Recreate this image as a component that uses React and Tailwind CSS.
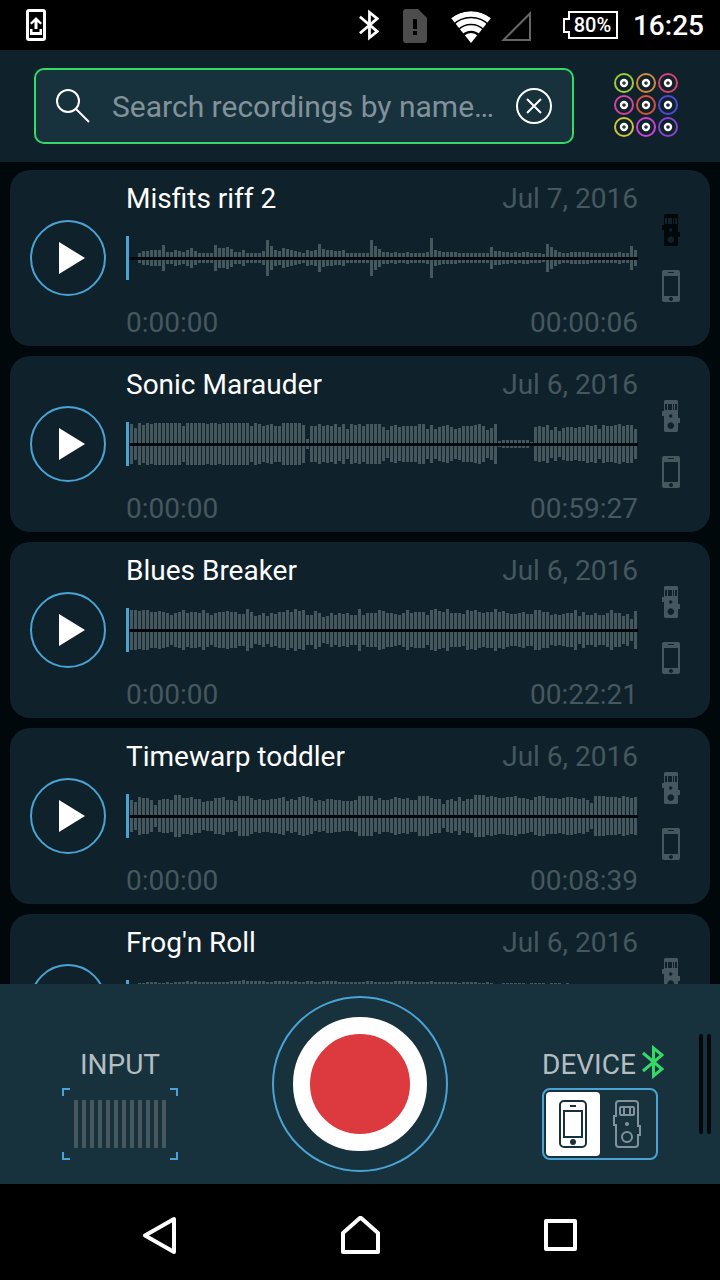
import React, { useState } from "react";

// One number per bar: its height above the centre line.
const recordings = [
  {
    title: "Misfits riff 2",
    date: "Jul 7, 2016",
    duration: "00:00:06",
    onRecorder: false,
    wave: [
      0, 0, 4, 6, 6, 7, 7, 7, 12, 5, 5, 7, 6, 5, 7, 9, 6, 4, 4, 4, 4, 12, 9, 9,
      10, 8, 5, 5, 7, 4, 4, 4, 4, 6, 17, 11, 7, 6, 9, 8, 7, 6, 5, 4, 7, 6, 7,
      13, 8, 7, 7, 6, 6, 7, 4, 4, 4, 4, 4, 4, 17, 11, 8, 5, 5, 4, 5, 4, 4, 5, 4,
      4, 4, 4, 5, 19, 7, 6, 5, 5, 5, 5, 4, 4, 4, 4, 4, 4, 4, 4, 10, 6, 6, 5, 5,
      4, 5, 4, 5, 5, 4, 4, 4, 3, 13, 10, 7, 5, 4, 4, 5, 5, 5, 5, 5, 4, 4, 4, 4,
      4, 4, 4, 5, 4, 4, 11, 7,
    ],
  },
  {
    title: "Sonic Marauder",
    date: "Jul 6, 2016",
    duration: "00:59:27",
    onRecorder: true,
    wave: [
      19, 15, 20, 18, 20, 19, 20, 20, 20, 20, 20, 20, 20, 17, 20, 20, 20, 20,
      20, 19, 20, 20, 19, 20, 20, 20, 20, 20, 20, 20, 17, 20, 19, 17, 18, 19,
      17, 17, 20, 20, 20, 20, 20, 18, 4, 17, 17, 19, 17, 18, 17, 19, 16, 19, 14,
      19, 18, 19, 17, 19, 19, 19, 19, 16, 13, 17, 18, 16, 17, 17, 17, 17, 19,
      19, 14, 18, 14, 16, 17, 18, 16, 14, 15, 17, 17, 17, 18, 19, 17, 13, 15,
      19, 2, 3, 3, 3, 3, 3, 3, 3, 1, 16, 17, 16, 18, 13, 16, 12, 15, 16, 16, 15,
      16, 16, 18, 17, 18, 14, 18, 17, 17, 18, 19, 17, 18, 18, 14,
    ],
  },
  {
    title: "Blues Breaker",
    date: "Jul 6, 2016",
    duration: "00:22:21",
    onRecorder: true,
    wave: [
      19, 19, 18, 19, 19, 17, 17, 18, 17, 16, 14, 16, 17, 19, 16, 17, 17, 16,
      19, 16, 14, 16, 17, 17, 18, 17, 17, 15, 15, 20, 17, 13, 14, 16, 13, 16,
      15, 17, 17, 19, 17, 20, 18, 19, 14, 14, 18, 16, 12, 13, 16, 14, 16, 15,
      16, 14, 14, 20, 14, 16, 16, 16, 19, 18, 16, 16, 15, 14, 16, 19, 16, 17,
      17, 17, 14, 19, 20, 18, 17, 20, 16, 16, 16, 15, 19, 18, 19, 17, 16, 17,
      17, 20, 17, 18, 16, 15, 15, 16, 17, 15, 15, 19, 19, 17, 17, 14, 15, 14,
      15, 16, 16, 19, 13, 17, 14, 14, 16, 14, 14, 16, 19, 16, 16, 13, 15, 10,
      18,
    ],
  },
  {
    title: "Timewarp toddler",
    date: "Jul 6, 2016",
    duration: "00:08:39",
    onRecorder: true,
    wave: [
      15, 13, 18, 17, 17, 15, 10, 15, 16, 16, 15, 20, 20, 17, 17, 18, 16, 16,
      13, 14, 14, 17, 17, 18, 15, 15, 14, 19, 19, 19, 17, 15, 16, 15, 15, 16,
      16, 17, 18, 14, 16, 15, 18, 19, 18, 17, 14, 15, 14, 16, 16, 15, 15, 14,
      14, 14, 15, 19, 19, 19, 19, 15, 17, 15, 15, 16, 18, 17, 16, 17, 15, 15,
      19, 19, 19, 17, 16, 16, 11, 15, 16, 14, 18, 14, 16, 16, 20, 20, 20, 18,
      19, 18, 17, 17, 18, 18, 19, 17, 17, 16, 15, 18, 19, 19, 17, 17, 17, 16,
      17, 18, 18, 17, 16, 17, 15, 12, 19, 19, 19, 18, 18, 18, 17, 19, 18, 17,
      18,
    ],
  },
  {
    title: "Frog'n Roll",
    date: "Jul 6, 2016",
    duration: "00:04:12",
    onRecorder: true,
    wave: [
      0, 0, 18, 18, 19, 19, 19, 18, 18, 19, 18, 19, 19, 19, 20, 19, 20, 19, 19,
      19, 19, 19, 19, 19, 19, 20, 20, 20, 21, 20, 20, 20, 20, 20, 19, 19, 20,
      20, 20, 20, 19, 20, 19, 19, 20, 20, 19, 19, 20, 20, 20, 20, 19, 19, 19,
      19, 19, 19, 19, 20, 20, 19, 19, 19, 19, 19, 20, 20, 20, 20, 20, 19, 19,
      19, 19, 20, 19, 19, 19, 19, 19, 19, 18, 19, 19, 19, 19, 18, 18, 19, 18,
      17, 17, 18, 18, 18, 18, 18, 18, 17, 18, 18, 18, 18, 17, 18, 18, 18, 17,
      18, 17, 16, 16, 15, 16, 17, 16, 15, 16, 16, 15, 14, 16, 16, 15, 14, 15,
    ],
  },
];

const knobs = [
  ["#9ccc3c", "#d08a3f", "#d6436f"],
  ["#d443a6", "#da523f", "#5248d8"],
  ["#cfc23c", "#cc43d6", "#8843cc"],
];

function Bluetooth({ className, strokeWidth = 3 }) {
  return (
    <svg viewBox="0 0 22 34" fill="none" stroke="currentColor" strokeWidth={strokeWidth} className={className}>
      <path d="M1 8 L20 24 L11.5 31 V3 L20 10 L1 26" />
    </svg>
  );
}

function StatusBar() {
  return (
    <div className="h-[50px] shrink-0 flex items-center bg-black text-white pl-[26px] pr-4">
      <svg viewBox="0 0 20 32" className="w-5 h-8">
        <rect x="1.5" y="1.5" width="17" height="29" rx="1.5" fill="none" stroke="currentColor" strokeWidth="3" />
        <path d="M10 8 L16 14 L14.5 15.5 L11.5 13 V20 H8.5 V13 L5.5 15.5 L4 14 Z" fill="currentColor" />
        <path d="M4 20 H6.5 V23 H13.5 V20 H16 V26 H4 Z" fill="currentColor" />
      </svg>
      <div className="ml-auto flex items-center">
        <Bluetooth className="w-5 h-8" strokeWidth={3} />
        <svg viewBox="0 -2 24 36" className="w-6 h-9 ml-6">
          <path d="M3 0 H15 L24 9 V31 Q24 34 21 34 H3 Q0 34 0 31 V3 Q0 0 3 0 Z" fill="#4d4d4d" />
          <path d="M10 10 H14 V20 H10 Z M10 22 H14 V26 H10 Z" fill="#000" />
        </svg>
        <svg viewBox="0 -4 40 36" className="w-10 h-9 ml-6">
          <defs>
            <clipPath id="wifi-fan">
              <path d="M20 32 L0 7 Q20 -7 40 7 Z" />
            </clipPath>
          </defs>
          <g clipPath="url(#wifi-fan)" fill="none" stroke="currentColor" strokeWidth="5.5">
            <circle cx="20" cy="32" r="29" />
            <circle cx="20" cy="32" r="22" />
            <circle cx="20" cy="32" r="15" />
            <circle cx="20" cy="32" r="5" strokeWidth="10" />
          </g>
        </svg>
        <svg viewBox="0 -2 30 32" className="w-[30px] h-8 ml-[10px]">
          <path d="M2.5 29 H29 V2.5 Z" fill="none" stroke="#666" strokeWidth="2" />
        </svg>
        <div className="relative ml-8 w-[55px] h-7">
          <svg viewBox="0 0 55 28" className="w-full h-full">
            <path d="M6 1 H54 V27 H6 V21 H1 V8 H6 Z" fill="none" stroke="currentColor" strokeWidth="2" />
          </svg>
          <span className="absolute inset-0 pl-1 text-center text-xl leading-7 font-medium">80%</span>
        </div>
        <span className="ml-[15px] pt-0.5 text-[28px] leading-8 font-medium">16:25</span>
      </div>
    </div>
  );
}

function Header() {
  const [query, setQuery] = useState("");

  return (
    <header className="h-28 shrink-0 flex items-center gap-10 bg-[#0f222b] pl-[34px] pr-[42px]">
      <div className="flex-1 min-w-0 h-[76px] flex items-center rounded-[10px] border-2 border-[#35d965] bg-[#17313d] px-5">
        <svg viewBox="0 0 34 34" fill="none" stroke="#fff" strokeWidth="2" className="w-[34px] h-[34px] shrink-0">
          <circle cx="12" cy="12" r="11" />
          <path d="M20 20 L33 33" />
        </svg>
        <input
          type="text"
          aria-label="Search recordings"
          placeholder="Search recordings by name…"
          value={query}
          onChange={(e) => setQuery(e.target.value)}
          className="flex-1 min-w-0 ml-[22px] mr-4 pt-0.5 bg-transparent text-[30px] leading-10 text-white placeholder:text-[#82929a] outline-none"
        />
        <button type="button" aria-label="Clear search" onClick={() => setQuery("")} className="shrink-0">
          <svg viewBox="0 0 36 36" fill="none" stroke="#fff" strokeWidth="2" className="w-9 h-9">
            <circle cx="18" cy="18" r="17" />
            <path d="M11 11 L25 25 M25 11 L11 25" />
          </svg>
        </button>
      </div>
      <button type="button" aria-label="Effects" className="shrink-0 pb-0.5">
        <svg viewBox="0 0 64 64" fill="none" className="w-16 h-16">
          {knobs.map((row, y) =>
            row.map((color, x) => (
              <g key={color} transform={`translate(${10 + x * 22} ${10 + y * 22})`}>
                <circle r="9" stroke={color} strokeWidth="2" />
                <circle r="3" fill={color} fillOpacity="0.2" stroke="#fff" strokeWidth="2.4" />
              </g>
            ))
          )}
        </svg>
      </button>
    </header>
  );
}

function Waveform({ bars }) {
  return (
    <svg viewBox="0 0 512 44" shapeRendering="crispEdges" className="w-full h-11 mt-[21px]">
      {bars.map((h, i) =>
        h > 0 ? (
          <g key={i} fill="#46575e">
            <rect x={4 + i * 4} y={21 - h} width="3" height={h} />
            <rect x={4 + i * 4} y="24" width="3" height={h - 1} />
          </g>
        ) : null
      )}
      <rect x="3" y="21" width="509" height="3" fill="#00080b" />
      <rect width="3" height="44" fill="#4aa3d3" />
    </svg>
  );
}

function RecorderSolid({ className }) {
  return (
    <svg viewBox="0 0 18 32" fill="currentColor" className={className}>
      <path
        fillRule="evenodd"
        d="M3 0 H15 L16 1 V18 H18 V23 H16 V31 L15 32 H3 L2 31 V16 H0 V11 H2 V1 Z M3 4 V10 H5 V4 Z M6 4 V10 H10 V4 Z M11 4 V10 H12 V4 Z M13 4 V10 H15 V4 Z M8.7 14.3 a1.7 1.7 0 1 0 .01 0 Z M8.8 22.3 a3.3 3.3 0 1 0 .01 0 Z"
      />
    </svg>
  );
}

function PhoneSolid({ className }) {
  return (
    <svg viewBox="0 0 18 32" fill="currentColor" className={className}>
      <path
        fillRule="evenodd"
        d="M2 0 H16 Q18 0 18 2 V30 Q18 32 16 32 H2 Q0 32 0 30 V2 Q0 0 2 0 Z M2 6 V26 H16 V6 Z M6 2 V3 H12 V2 Z M9 27 a2 2 0 1 0 .01 0 Z"
      />
    </svg>
  );
}

function RecordingCard({ recording }) {
  return (
    <li className="h-44 shrink-0 flex items-center rounded-[20px] bg-[#0f222b] pl-5 pr-[30px]">
      <button
        type="button"
        aria-label={`Play ${recording.title}`}
        className="w-[76px] h-[76px] shrink-0 rounded-full border-2 border-[#4aa3d3]"
      >
        <svg viewBox="0 0 72 72" fill="#fff" className="w-full h-full">
          <path d="M27 20 L53 36 L27 52 Z" />
        </svg>
      </button>
      <div className="flex-1 min-w-0 h-full flex flex-col ml-5 mr-6 pt-[13px] text-[28px] leading-8 text-[#46575e]">
        <div className="flex justify-between">
          <h2 className="text-white truncate">{recording.title}</h2>
          <span className="shrink-0">{recording.date}</span>
        </div>
        <Waveform bars={recording.wave} />
        <div className="flex justify-between mt-[27px]">
          <span>0:00:00</span>
          <span>{recording.duration}</span>
        </div>
      </div>
      <div className="flex flex-col gap-6 text-[#46575e]">
        <RecorderSolid className={`w-[18px] h-8 ${recording.onRecorder ? "" : "text-[#00080b]"}`} />
        <PhoneSolid className="w-[18px] h-8" />
      </div>
    </li>
  );
}

function RecordPanel() {
  const [device, setDevice] = useState("phone");
  const corner = "absolute w-2 h-2 border-[#4aa3d3]";

  return (
    <footer className="relative h-[200px] shrink-0 grid grid-cols-3 items-center justify-items-center bg-[#17313d] text-[28px] leading-8 text-[#b4bdc1]">
      <div className="w-[116px] flex flex-col gap-[7px] pt-[41px]">
        <span className="text-center">INPUT</span>
        <div className="relative h-[72px] flex items-center justify-center gap-1">
          <i className={`${corner} left-0 top-0 border-l-2 border-t-2`} />
          <i className={`${corner} right-0 top-0 border-r-2 border-t-2`} />
          <i className={`${corner} left-0 bottom-0 border-l-2 border-b-2`} />
          <i className={`${corner} right-0 bottom-0 border-r-2 border-b-2`} />
          {Array.from({ length: 12 }, (_, i) => (
            <span key={i} className="w-1 h-12 bg-[#46575e]" />
          ))}
        </div>
      </div>

      <button
        type="button"
        aria-label="Record"
        className="w-44 h-44 flex items-center justify-center rounded-full border-2 border-[#4aa3d3]"
      >
        <span className="w-[134px] h-[134px] rounded-full border-[17px] border-white bg-[#dc3a3f]" />
      </button>

      <div role="radiogroup" aria-labelledby="device-label" className="w-[116px] flex flex-col gap-[7px] pt-[41px]">
        <div className="flex items-center gap-[6px] h-8">
          <span id="device-label">DEVICE</span>
          <Bluetooth className="w-[22px] h-[34px] shrink-0 mb-[6px] text-[#35d965]" />
        </div>
        <div className="h-[72px] flex rounded-lg border-2 border-[#4aa3d3] p-[2px]">
          <label className="relative flex-1 flex items-center justify-center rounded-[4px] text-[#82929a] has-checked:bg-white has-checked:text-[#17313d]">
            <input
              type="radio"
              name="device"
              aria-label="Phone"
              checked={device === "phone"}
              onChange={() => setDevice("phone")}
              className="absolute inset-0 appearance-none"
            />
            <svg viewBox="0 0 28 48" fill="none" stroke="currentColor" strokeWidth="2" className="w-7 h-12">
              <rect x="1" y="1" width="26" height="46" rx="4" />
              <rect x="5" y="11" width="18" height="26" />
              <path d="M11 6 H17" />
              <circle cx="14" cy="42" r="3" fill="currentColor" stroke="none" />
            </svg>
          </label>
          <label className="relative flex-1 flex items-center justify-center rounded-[4px] text-[#82929a] has-checked:bg-white has-checked:text-[#17313d]">
            <input
              type="radio"
              name="device"
              aria-label="Recorder"
              checked={device === "recorder"}
              onChange={() => setDevice("recorder")}
              className="absolute inset-0 appearance-none"
            />
            <svg viewBox="0 0 28 48" fill="none" stroke="currentColor" strokeWidth="2" className="w-7 h-12">
              <path d="M3 16 V4 Q3 1 6 1 H22 Q25 1 25 4 V26 H27 V35 H25 V44 Q25 47 22 47 H6 Q3 47 3 44 V25 H1 V16 Z" />
              <rect x="7" y="7" width="14" height="8" rx="1" />
              <path d="M11 7 V15 M17 7 V15" />
              <circle cx="14" cy="24" r="2" fill="currentColor" stroke="none" />
              <circle cx="14" cy="37" r="5" />
            </svg>
          </label>
        </div>
      </div>

      <button type="button" aria-label="Open side panel" className="absolute right-[9px] top-[50px] flex gap-1">
        <span className="w-1 h-[100px] rounded-full bg-[#00080b]" />
        <span className="w-1 h-[100px] rounded-full bg-[#00080b]" />
      </button>
    </footer>
  );
}

function NavBar() {
  const shape = { fill: "none", stroke: "#fff", strokeWidth: 4, strokeLinejoin: "round" };

  return (
    <nav className="h-24 shrink-0 grid grid-cols-3 items-center justify-items-center bg-black px-[60px] pt-2">
      <button type="button" aria-label="Back">
        <svg viewBox="0 0 40 40" className="w-10 h-10">
          <path d="M5 19.5 L34 3 V36 Z" {...shape} />
        </svg>
      </button>
      <button type="button" aria-label="Home">
        <svg viewBox="0 0 40 40" className="w-10 h-10">
          <path d="M3 36 V17 L20.5 1.5 L38 17 V36 Z" {...shape} />
        </svg>
      </button>
      <button type="button" aria-label="Recent apps">
        <svg viewBox="0 0 40 40" className="w-10 h-10">
          <path d="M6 5 H35 V33 H6 Z" {...shape} />
        </svg>
      </button>
    </nav>
  );
}

export default function App() {
  return (
    <div className="h-screen flex flex-col bg-[#00080b] font-['Roboto',sans-serif]">
      <StatusBar />
      <Header />
      <main className="flex-1 min-h-0 overflow-hidden px-[10px] pt-2">
        <ul className="flex flex-col gap-[10px]">
          {recordings.map((recording) => (
            <RecordingCard key={recording.title} recording={recording} />
          ))}
        </ul>
      </main>
      <RecordPanel />
      <NavBar />
    </div>
  );
}
